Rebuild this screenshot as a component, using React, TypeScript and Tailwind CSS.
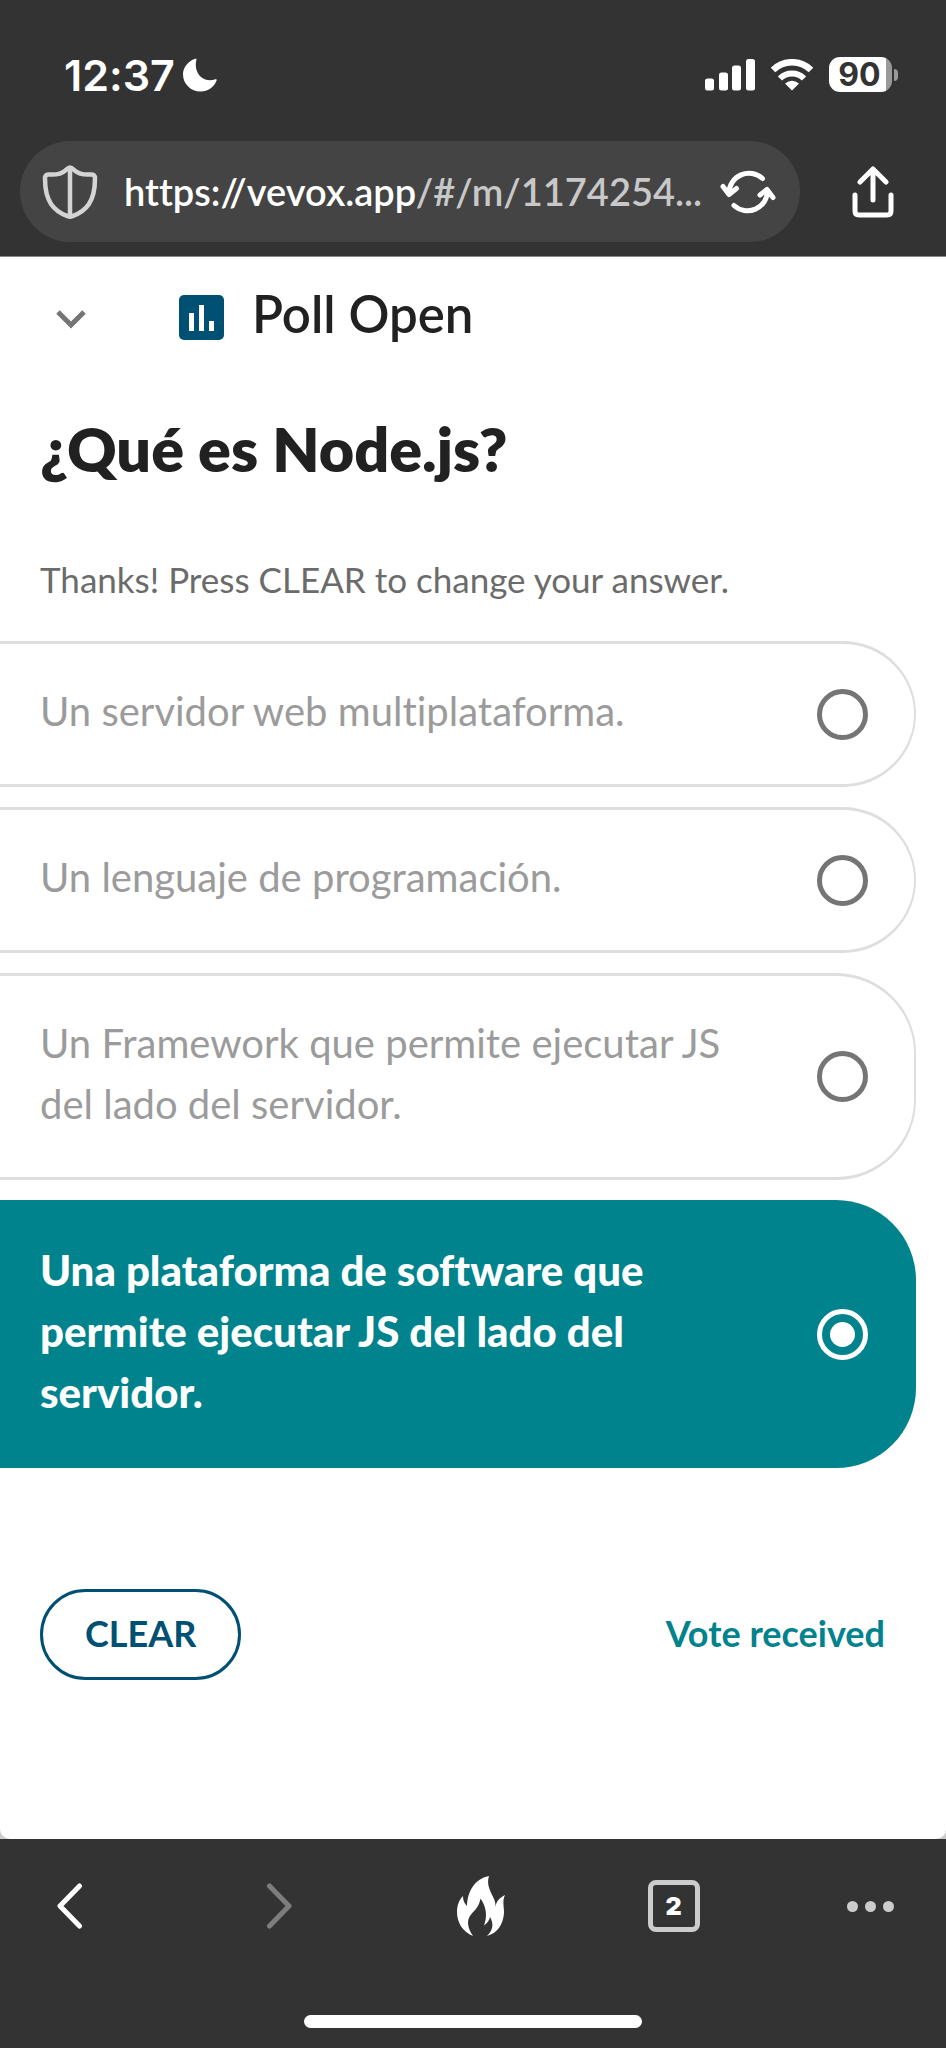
import { useState } from "react";

const options = [
  "Un servidor web multiplataforma.",
  "Un lenguaje de programación.",
  "Un Framework que permite ejecutar JS del lado del servidor.",
  "Una plataforma de software que permite ejecutar JS del lado del servidor.",
];

function StatusBar() {
  return (
    <div className="flex h-[141px] items-center justify-between pt-2 pr-12 pl-16 font-['Inter',sans-serif]">
      <div className="flex items-center gap-2">
        <span className="text-[43px] leading-[52px] font-semibold">12:37</span>
        <svg className="h-[34px] w-[34px]" viewBox="0 0 34 34" fill="currentColor" aria-hidden="true">
          <path d="M12.2.8c.9-.4 1.500.1 1.200 1C11 11.600 16 22 27 22.300c2 0 3.700-.4 5.200-1 1-.4 1.800.1 1.400 1.200C31.200 29 25 33.500 17.500 33.500 8 33.500 0 26 0 16.500 0 9.500 5 3.300 12.200.8Z" />
        </svg>
      </div>
      <div className="flex items-center gap-4">
        <svg className="h-8 w-[50px]" viewBox="0 0 50 32" fill="currentColor" aria-hidden="true">
          <rect x="0" y="19.500" width="9" height="12" rx="2.500" />
          <rect x="14" y="13.500" width="9" height="18" rx="2.500" />
          <rect x="27" y="6.500" width="9" height="25" rx="2.500" />
          <rect x="41" y="0" width="9" height="31.500" rx="2.500" />
        </svg>
        <svg className="h-8 w-[42px]" viewBox="0 0 42 32" fill="none" stroke="currentColor" aria-hidden="true">
          <path d="M2 11a27 27 0 0 1 38 0" strokeWidth="6.500" />
          <path d="M9 19.500a17 17 0 0 1 24 0" strokeWidth="6" />
          <path d="M21 31.500 14 24.500q7-5.500 14 0Z" fill="currentColor" stroke="none" />
        </svg>
        <div className="flex items-center gap-[2px]">
          <div className="flex h-[35px] w-[63px] items-center justify-center rounded-[11px] bg-linear-to-r from-white from-90% to-[#999] to-90% text-[32px] leading-[35px] font-bold text-[#333]">
            <span className="pr-[2px]">90</span>
          </div>
          <div className="h-[12px] w-[4px] rounded-r-full bg-[#999]" />
        </div>
      </div>
    </div>
  );
}

function AddressBar() {
  return (
    <div className="flex items-center pb-[14px] pl-5">
      <div className="flex h-[101px] flex-1 items-center rounded-full bg-[#444] pr-6 pl-[22px]">
        <button aria-label="Privacy" className="text-[#d4d4d4]">
          <svg className="h-[56px] w-[56px]" viewBox="0 0 56 56" fill="none" stroke="currentColor" strokeWidth="4.500" strokeLinejoin="round" aria-hidden="true">
            <path d="M28 3.500c-1.800 0-3 1.200-4.500 2.800C20 9.500 15 11 7.500 10.500 4.500 10.300 3 11.500 3 14.500 3 38 12 47 25.500 52.200q2.500.9 5 0C44 47 53 38 53 14.500c0-3-1.500-4.200-4.500-4C41 11 36 9.500 32.500 6.300 31 4.700 29.800 3.500 28 3.500ZM28 4v48" />
          </svg>
        </button>
        <div className="min-w-0 flex-1 pb-[2px] pl-[26px] text-[38px] leading-[52px] font-semibold whitespace-nowrap">
          https://vevox.app<span className="text-[#c8c8c8]">/#/m/1174254...</span>
        </div>
        <button aria-label="Reload">
          <svg className="h-[46px] w-[56px]" viewBox="0 0 56 46" fill="none" stroke="currentColor" strokeWidth="5" strokeLinecap="round" strokeLinejoin="round" aria-hidden="true">
            <path d="M42.500 9.500A20 20 0 0 0 9 24M3 17.500 9 25.500 16.500 19.500M14 36.500A20 20 0 0 0 47.500 22M40 26 47 20.500 53 28.500" />
          </svg>
        </button>
      </div>
      <button aria-label="Share" className="flex w-[146px] justify-center">
        <svg className="h-[52px] w-[42px]" viewBox="0 0 42 52" fill="none" stroke="currentColor" strokeWidth="5" strokeLinecap="round" strokeLinejoin="round" aria-hidden="true">
          <path d="M21 34V3M8 16 21 3 34 16M3 29v16q0 4 4 4h28q4 0 4-4V29" />
        </svg>
      </button>
    </div>
  );
}

function Option({ text, checked, onSelect }: { text: string; checked: boolean; onSelect: () => void }) {
  const box = checked
    ? "border-[#00838c] bg-[#00838c] text-[42px] font-black text-white"
    : "border-[#dedede] text-[40px] text-[#9b9b9b]";
  const radio = checked ? "border-white before:bg-white" : "border-[#757575]";
  return (
    <label className={`mr-[30px] flex items-center rounded-r-[80px] border-y-3 border-r-2 pr-[46px] pl-10 ${box}`}>
      <span className="flex-1 pt-[37px] pr-[76px] pb-[42px] leading-[61px]">{text}</span>
      <input
        type="radio"
        name="answer"
        checked={checked}
        onChange={onSelect}
        className={`grid h-[51px] w-[51px] shrink-0 appearance-none place-items-center rounded-full border-[5px] before:h-[25px] before:w-[25px] before:rounded-full ${radio}`}
      />
    </label>
  );
}

function Toolbar() {
  return (
    <footer className="bg-[#333] text-white">
      <nav className="flex items-center justify-between px-10 pt-9">
        <button aria-label="Back" className="flex w-[60px] justify-center">
          <svg className="h-[46px] w-[26px]" viewBox="0 0 26 46" fill="none" stroke="currentColor" strokeWidth="5" strokeLinecap="round" strokeLinejoin="round" aria-hidden="true">
            <path d="M22.500 3 3 23l19.500 20" />
          </svg>
        </button>
        <button aria-label="Forward" className="flex w-[80px] justify-center pl-2 text-[#7d7d7d]">
          <svg className="h-[46px] w-[26px]" viewBox="0 0 26 46" fill="none" stroke="currentColor" strokeWidth="5" strokeLinecap="round" strokeLinejoin="round" aria-hidden="true">
            <path d="M3.500 3 23 23 3.500 43" />
          </svg>
        </button>
        <button aria-label="Clear data" className="flex w-16 justify-center">
          <svg className="h-[62px] w-[50px]" viewBox="0 0 50 62" fill="currentColor" aria-hidden="true">
            <path d="M33 1c-3 9 2 16 5 23 1.200 3 1.600 5 1.500 8 .5-5 3.500-9 9.500-12-3 6-.8 12-1 18-.8 11-6 20-17 23 6-6 7-12 3-19-.6 3.500-3 6.500-6 8.500 3.500-9 2.500-18.500-3.500-27-1.500 8-5 11-9 15.500C10 45 11.500 53 17 61 7 57 1 48 1 37c0-7 2-12 6-16 0 4 1 7 4 10C11.500 17 18 4 33 1Z" />
          </svg>
        </button>
        <button aria-label="Tabs" className="flex h-[52px] w-[52px] items-center justify-center rounded-[8px] border-[5px] border-[#ccc] font-['Inter',sans-serif] text-[25px] leading-[26px] font-black">
          2
        </button>
        <button aria-label="More" className="flex w-[72px] justify-center gap-[7px]">
          <span className="h-[11px] w-[11px] rounded-full bg-[#ccc]" />
          <span className="h-[11px] w-[11px] rounded-full bg-[#ccc]" />
          <span className="h-[11px] w-[11px] rounded-full bg-[#ccc]" />
        </button>
      </nav>
      <div className="mx-auto mt-[78px] mb-5 h-[13px] w-[338px] rounded-full bg-white" />
    </footer>
  );
}

export default function App() {
  const [selected, setSelected] = useState(3);
  return (
    <div className="flex min-h-screen flex-col bg-[#333] font-['Lato',sans-serif] [font-variant-ligatures:none]">
      <header className="border-b border-[#888] bg-[#333] text-white">
        <StatusBar />
        <AddressBar />
      </header>
      <div className="flex flex-1 flex-col bg-[#ccc]">
        <main className="flex-1 rounded-b-[10px] bg-white text-[#212121]">
          <div className="flex items-center pt-7 pl-[54px]">
            <button aria-label="Collapse" className="pt-1 text-[#757575]">
              <svg className="h-[34px] w-[34px]" viewBox="0 0 34 34" fill="none" stroke="currentColor" strokeWidth="5" aria-hidden="true">
                <path d="m4 12 13 13 13-13" />
              </svg>
            </button>
            <svg className="mt-1 ml-[90px] h-[46px] w-[46px]" viewBox="0 0 46 46" aria-hidden="true">
              <rect x="1" y="1" width="45" height="45" rx="5" fill="#005073" />
              <path d="M11 19h5v18h-5zM21 11h5v26h-5zM31 27h5v10h-5z" fill="white" />
            </svg>
            <h2 className="ml-7 pb-[2px] text-[51px] leading-[58px] font-semibold">Poll Open</h2>
          </div>
          <h1 className="px-10 pt-[66px] text-[61px] leading-[76px] font-extrabold">¿Qué es Node.js?</h1>
          <p className="px-10 pt-[68px] text-[35px] leading-[48px] text-[#6b6b6b]">Thanks! Press CLEAR to change your answer.</p>
          <div className="mt-[38px] flex flex-col gap-5">
            {options.map((text, i) => (
              <Option key={text} text={text} checked={selected === i} onSelect={() => setSelected(i)} />
            ))}
          </div>
          <div className="flex items-center justify-between pt-[121px] pr-[61px] pl-10 text-[36px] leading-[48px] font-bold">
            <button onClick={() => setSelected(-1)} className="h-[91px] rounded-full border-3 border-[#005073] px-[42px] pb-1 text-[#005073]">
              CLEAR
            </button>
            <output className="pb-1 text-[#00838c]">Vote received</output>
          </div>
        </main>
      </div>
      <Toolbar />
    </div>
  );
}
